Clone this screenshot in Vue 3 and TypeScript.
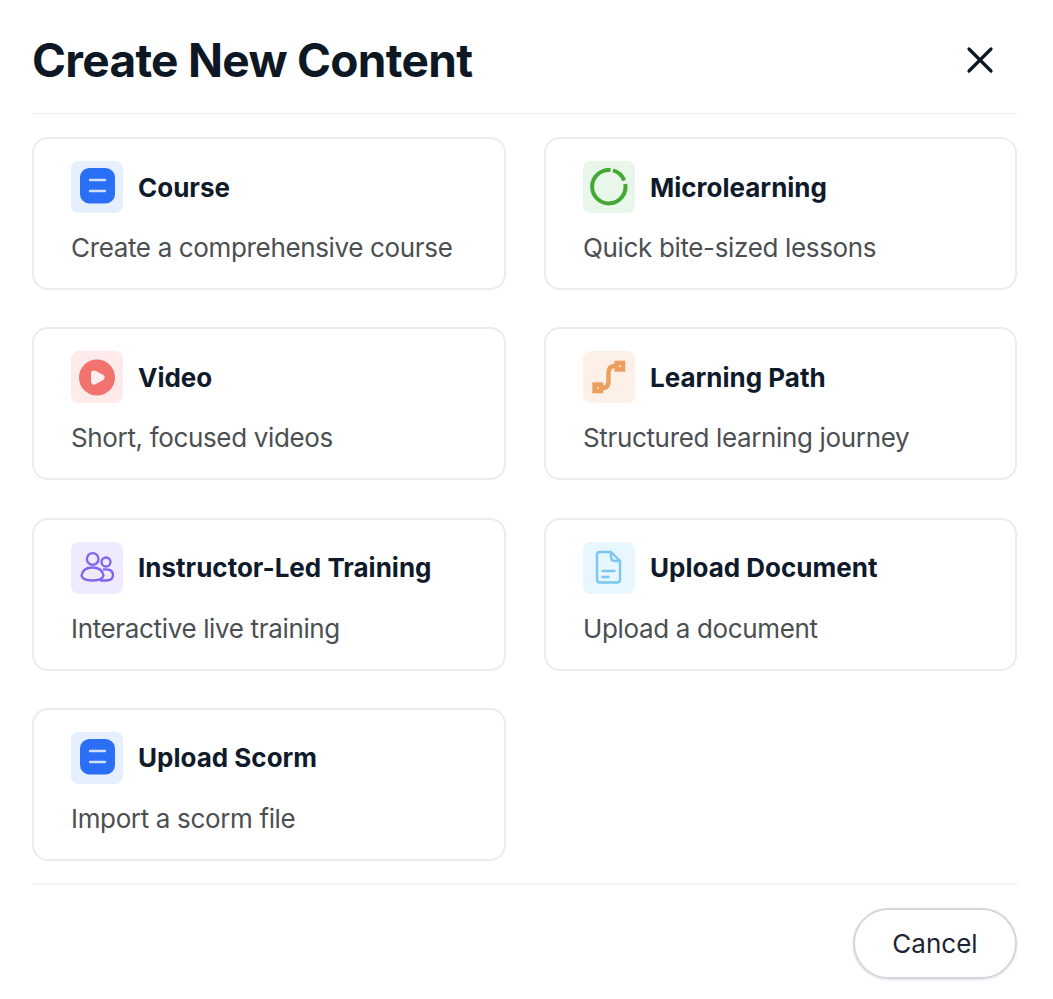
<script setup lang="ts">
interface Item { title: string; desc: string; icon: string; bg: string }
const items: Item[] = [
  { title: 'Course', desc: 'Create a comprehensive course', icon: 'doc', bg: '#e5effe' },
  { title: 'Microlearning', desc: 'Quick bite-sized lessons', icon: 'ring', bg: '#e9f6ea' },
  { title: 'Video', desc: 'Short, focused videos', icon: 'play', bg: '#fcebea' },
  { title: 'Learning Path', desc: 'Structured learning journey', icon: 'path', bg: '#fdf1e7' },
  { title: 'Instructor-Led Training', desc: 'Interactive live training', icon: 'people', bg: '#efeafe' },
  { title: 'Upload Document', desc: 'Upload a document', icon: 'file', bg: '#e8f6fe' },
  { title: 'Upload Scorm', desc: 'Import a scorm file', icon: 'doc', bg: '#e5effe' },
]
</script>

<template>
  <div class="modal">
    <header class="head">
      <h1>Create New Content</h1>
      <button class="close" aria-label="Close">
        <svg width="30" height="30" viewBox="0 0 30 30" fill="none" stroke="#0c1622" stroke-width="3.2" stroke-linecap="round">
          <path d="M4 4 L26 26 M26 4 L4 26" />
        </svg>
      </button>
    </header>
    <div class="grid">
      <article v-for="item in items" :key="item.title" class="card">
        <div class="top">
          <span class="icon" :style="{ background: item.bg }">
            <svg width="52" height="52" viewBox="0 0 52 52" fill="none">
              <template v-if="item.icon === 'doc'">
                <rect x="9" y="7" width="35" height="35.500" rx="9.500" fill="#2a6ff5" />
                <path d="M19 19H34M19 30H34" stroke="#cfe0fd" stroke-width="2.400" stroke-linecap="round" />
              </template>
              <template v-else-if="item.icon === 'ring'">
                <path d="M27.500 9.100A16.700 16.700 0 1 0 42.300 23" stroke="#44a934" stroke-width="4" />
                <path d="M30 9.400A16.700 16.700 0 0 1 41.200 19.500" stroke="#44a934" stroke-width="4" />
              </template>
              <template v-else-if="item.icon === 'play'">
                <circle cx="26" cy="26.500" r="18" fill="#f1726f" />
                <path d="M23 22.500L30.500 26.500L23 30.500Z" fill="#fdeeee" stroke="#fdeeee" stroke-width="6" stroke-linejoin="round" />
              </template>
              <template v-else-if="item.icon === 'path'">
                <path d="M18 37H20Q25.500 37 25.500 30V22Q25.500 15 32 15H34" stroke="#eba05f" stroke-width="4.500" />
                <rect x="9.300" y="31.300" width="11" height="11" fill="#eba05f" />
                <rect x="31.300" y="9.700" width="11" height="11" fill="#eba05f" />
                <circle cx="14.800" cy="36.800" r="1" fill="#fde9d8" />
                <circle cx="36.800" cy="15.200" r="1" fill="#fde9d8" />
              </template>
              <template v-else-if="item.icon === 'people'">
                <g stroke="#8163ee" stroke-width="2.300">
                  <circle cx="21.700" cy="17" r="5.800" />
                  <circle cx="35" cy="20" r="4.500" />
                  <path d="M10.500 33.500Q12 25.500 21.500 25.500Q31 25.500 32.500 33.500Q31.500 38.500 21.500 38.500Q11.500 38.500 10.500 33.500Z" />
                  <path d="M32 27.500Q42 26.500 42 33Q42 38.500 35 38.500H29" />
                </g>
              </template>
              <template v-else>
                <g stroke="#79c8f0" stroke-width="2.400" stroke-linejoin="round" stroke-linecap="round">
                  <path d="M17 10H28L37 19V37Q37 40.500 34 40.500H17Q14 40.500 14 37V13Q14 10 17 10Z" />
                  <path d="M28 10V15Q28 19 32 19H37" />
                  <path d="M19.500 29H31.500M19.500 35H25.500" />
                </g>
              </template>
            </svg>
          </span>
          <h2>{{ item.title }}</h2>
        </div>
        <p>{{ item.desc }}</p>
      </article>
    </div>
    <footer class="foot">
      <button class="cancel">Cancel</button>
    </footer>
  </div>
</template>

<style>
html, body { background: #fff; margin: 0; }
</style>

<style scoped>
.modal {
  width: 985px;
  height: 999px;
  margin-left: 32px;
  box-sizing: border-box;
  font-family: Inter, "Noto Sans", sans-serif;
  color: #0f1a2a;
  display: flex;
  flex-direction: column;
}
.head {
  height: 114px;
  box-sizing: border-box;
  border-bottom: 1px solid #efefef;
  display: flex;
  align-items: center;
  justify-content: space-between;
  padding-top: 6px;
}
h1 {
  margin: 0;
  font-size: 46px;
  line-height: 56px;
  font-weight: 700;
  letter-spacing: -0.7px;
  color: #0d1824;
}
.close {
  width: 30px;
  height: 30px;
  padding: 0;
  margin-right: 22px;
  background: none;
  border: 0;
  display: flex;
}
.grid {
  margin-top: 23px;
  display: grid;
  grid-template-columns: 474px 473px;
  column-gap: 38px;
  row-gap: 37.330px;
}
.card {
  height: 153px;
  box-sizing: border-box;
  border: 2px solid #ececec;
  border-radius: 16px;
  padding: 22px 37px 0;
}
.top {
  display: flex;
  align-items: center;
  gap: 15px;
}
.icon {
  width: 52px;
  height: 52px;
  border-radius: 8px;
  display: block;
  flex: none;
}
.icon svg { display: block; }
h2 {
  margin: 0;
  padding-top: 1px;
  font-size: 26px;
  line-height: 32px;
  font-weight: 700;
  color: #0f1a2a;
}
p {
  margin: 19px 0 0;
  font-size: 26px;
  line-height: 32px;
  font-weight: 400;
  letter-spacing: -0.35px;
  color: #4c4f52;
}
.foot {
  margin-top: 22px;
  border-top: 2px solid #f2f2f2;
  padding-top: 23px;
  display: flex;
  justify-content: flex-end;
}
.cancel {
  width: 164px;
  height: 71px;
  box-sizing: border-box;
  border: 2px solid #d3d6dc;
  border-radius: 36px;
  background: #fff;
  font-family: inherit;
  font-size: 26px;
  color: #1b2533;
  box-shadow: 0 1px 3px rgba(20, 30, 50, 0.12);
}
</style>
